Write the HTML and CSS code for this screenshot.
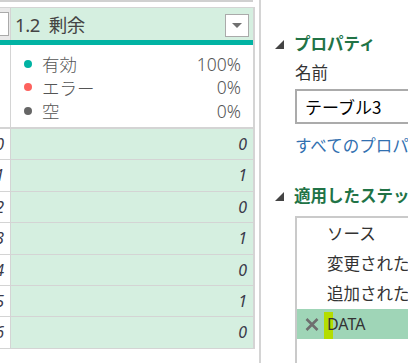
FILE: index.html
```html
<!DOCTYPE html>
<html lang="ja">
<head>
<meta charset="UTF-8" />
<meta name="viewport" content="width=device-width, initial-scale=1" />
<title>Power Query</title>
<link rel="stylesheet" href="styles.css">
</head>
<body>
<div class="app">
  <div class="grid-pane">
    <div class="top-line"></div>
    <div class="table">
      <div class="row head">
        <div class="idx"><span class="dd-edge"></span></div>
        <div class="val">
          <span class="col-name">1.2&nbsp; 剰余</span>
          <span class="dd"><span class="tri"></span></span>
        </div>
      </div>
      <div class="teal"></div>
      <div class="row stats">
        <div class="idx"></div>
        <div class="val">
          <div class="stat"><span class="dot ok"></span><span class="lbl">有効</span><span class="pct">100%</span></div>
          <div class="stat"><span class="dot err"></span><span class="lbl">エラー</span><span class="pct">0%</span></div>
          <div class="stat"><span class="dot empty"></span><span class="lbl">空</span><span class="pct">0%</span></div>
        </div>
      </div>
      <div class="row data"><div class="idx">0</div><div class="val">0</div></div>
      <div class="row data"><div class="idx">1</div><div class="val">1</div></div>
      <div class="row data"><div class="idx">2</div><div class="val">0</div></div>
      <div class="row data"><div class="idx">3</div><div class="val">1</div></div>
      <div class="row data"><div class="idx">4</div><div class="val">0</div></div>
      <div class="row data"><div class="idx">5</div><div class="val">1</div></div>
      <div class="row data"><div class="idx">6</div><div class="val">0</div></div>
    </div>
  </div>
  <div class="divider"></div>
  <div class="props">
    <h2 class="sec"><span class="caret"></span>プロパティ</h2>
    <div class="label">名前</div>
    <div class="input">テーブル3</div>
    <a class="link" href="#">すべてのプロパティ</a>
    <h2 class="sec steps-head"><span class="caret"></span>適用したステップ</h2>
    <ul class="steps">
      <li>ソース</li>
      <li>変更された型</li>
      <li>追加されたカスタム</li>
      <li class="sel">
        <svg class="x" width="14" height="13" viewBox="0 0 14 13"><path d="M1.5 1 L12.5 12 M12.5 1 L1.5 12" stroke="#6e6e6e" stroke-width="2.6" fill="none"/></svg>
        <span class="step-name">DATA</span>
      </li>
    </ul>
  </div>
</div>
</body>
</html>
```

FILE: styles.css
```css
body { margin: 0; background: #fff; font-family: "Noto Sans", "Noto Sans CJK JP", sans-serif; color: #333; }
.app { display: flex; width: 408px; height: 363px; overflow: hidden; }

/* grid */
.grid-pane { width: 255px; flex: none; }
.top-line { height: 2px; background: #d0d0d0; width: 253px; }
.table { margin-top: 5px; border-top: 1px solid #d4d4d4; border-right: 2px solid #d4d4d4; width: 253px; }
.row { display: flex; }
.idx { width: 11px; flex: none; border-right: 1px solid #d4d4d4; box-sizing: border-box; overflow: hidden; }
.val { flex: 1; }

.head { height: 32px; }
.head .idx { background: #e9e9e9; position: relative; }
.dd-edge { position: absolute; left: -6px; top: 4px; width: 13px; height: 22px; background: #fff; border: 1px solid #aaa; }
.head .val { background: #d5efe0; display: flex; align-items: center; justify-content: space-between; padding: 0 4px 0 4px; }
.col-name { font-size: 18.5px; color: #444; letter-spacing: -0.4px; }
.dd { width: 22px; height: 21px; border: 1px solid #aaa; background: #fff; display: flex; align-items: center; justify-content: center; margin-top: 3px; }
.tri { width: 0; height: 0; border-left: 5px solid transparent; border-right: 5px solid transparent; border-top: 5px solid #707070; }
.teal { height: 5px; background: #01b3a3; }

.stats { height: 82px; border-bottom: 2px solid #d4d4d4; }
.stats .val { padding: 7px 12px 0 13px; }
.stat { display: flex; align-items: center; height: 23.5px; font-size: 17.5px; color: #555; }
.dot { width: 8px; height: 8px; border-radius: 50%; margin-right: 10px; }
.dot.ok { background: #01b3a3; }
.dot.err { background: #fd625e; }
.dot.empty { background: #666; }
.lbl { flex: 1; font-weight: 300; }
.pct { font-weight: 300; }

.data { height: 31.4px; border-bottom: 1px solid #d4d4d4; box-sizing: border-box; font-size: 16px; font-style: italic; color: #3a3a4a; }
.data .idx { text-align: right; padding-right: 6px; line-height: 30px; direction: rtl; }
.data .val { background: #d5efe0; text-align: right; padding-right: 6px; line-height: 30px; }

.divider { width: 2px; height: 363px; background: #d4d4d4; margin-left: 4px; flex: none; }

/* properties */
.props { flex: 1; padding-left: 14px; white-space: nowrap; overflow: hidden; font-family: "Noto Sans CJK JP", sans-serif; }
.sec { margin: 30px 0 0 0; font-size: 16.5px; font-weight: 700; color: #217346; display: flex; align-items: center; height: 26px; }
.caret { width: 0; height: 0; border-left: 9px solid transparent; border-bottom: 9px solid #444; margin-right: 10px; margin-top: 2px; }
.label { margin: 4px 0 0 20px; font-size: 16.5px; color: #333; height: 24px; line-height: 24px; }
.input { margin: 5px 0 0 20px; border: 2px solid #ababab; border-right: none; height: 31px; line-height: 31px; padding-left: 8px; font-size: 17px; color: #000; }
.link { display: block; margin: 9px 0 0 20px; font-size: 16.5px; color: #3270b0; text-decoration: none; height: 24px; line-height: 24px; }
.steps-head { margin-top: 25px; }
.steps { list-style: none; margin: 8px 0 0 20px; padding: 0; border-top: 2px solid #cacaca; border-left: 2px solid #cacaca; height: 160px; }
.steps li { height: 30px; line-height: 30px; padding-left: 30px; font-size: 16.5px; color: #333; position: relative; }
.steps li.sel { background: #9fd5b7; display: flex; align-items: center; padding-left: 8px; margin-top: 1px; z-index: 0; }
.steps li.sel::before { content: ""; position: absolute; left: 27px; top: 3px; width: 9px; height: 27px; background: #b4dd00; z-index: -1; }
.x { margin-right: 8px; }
.step-name { font-family: "Noto Sans", sans-serif; font-size: 16px; }
```
